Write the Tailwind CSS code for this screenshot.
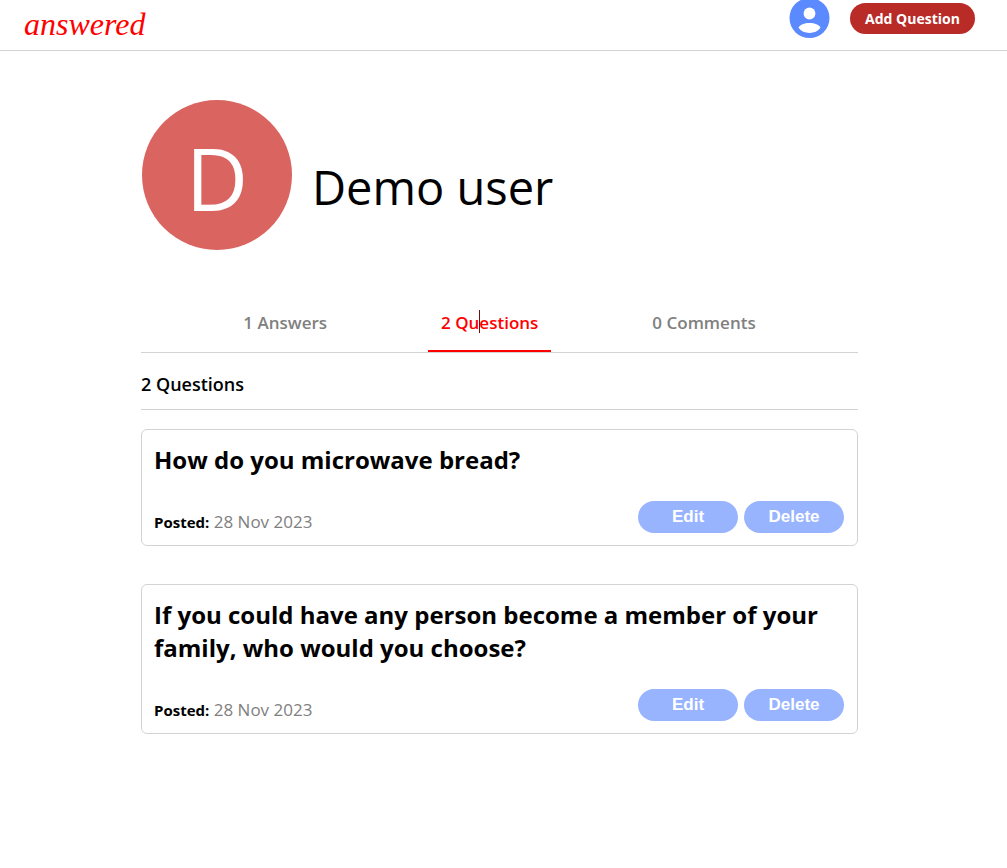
<!DOCTYPE html>
<html lang="en">
<head>
<meta charset="utf-8">
<meta name="viewport" content="width=device-width, initial-scale=1">
<title>answered - Demo user</title>
<script src="https://cdn.jsdelivr.net/npm/@tailwindcss/browser@4"></script>
</head>
<body class="bg-white text-black font-['Segoe_UI','Open_Sans',sans-serif]">
<header class="flex h-[51px] justify-between border-b border-[#d3d3d3] pl-6 pr-8">
  <a href="#" class="pt-1 font-['Liberation_Serif',serif] text-[32px] leading-10 text-[red] italic">answered</a>
  <div class="flex items-start gap-5">
    <button type="button" aria-label="Profile">
      <svg class="block" width="41" height="38" viewBox="0 2 41 38" aria-hidden="true">
        <circle cx="20.500" cy="20" r="20" fill="#5b8aff"/>
        <circle cx="20.500" cy="15.500" r="5.900" fill="#fff"/>
        <path d="M9.500 29.800C10.500 26.800 15.500 25 20.500 25S30.500 26.800 31.500 29.800C29 33.200 25 35 20.500 35S12 33.200 9.500 29.800Z" fill="#fff"/>
      </svg>
    </button>
    <button type="button" class="mt-[3px] h-[31px] w-[125px] whitespace-nowrap rounded-full bg-[#b92b27] text-sm font-bold text-white">Add Question</button>
  </div>
</header>
<main class="pl-[141px] pr-[149px] pt-[49px]">
  <section class="flex items-center gap-5 pl-px">
    <div class="flex size-[150px] shrink-0 items-center justify-center rounded-full bg-[#d96460] pt-1.5 text-[86px] leading-none font-medium text-white">D</div>
    <h1 class="pt-6 text-[47px] leading-12 font-normal">Demo user</h1>
  </section>
  <nav class="mt-11 flex justify-center gap-[88px] border-b border-[#d3d3d3] text-[17px] font-semibold text-[gray]">
    <a href="#" class="flex h-[58px] items-center border-b-2 border-transparent px-[13px] pt-px">1 Answers</a>
    <a href="#" aria-current="page" class="relative flex h-[58px] items-center border-b-2 border-[red] px-[13px] pt-px text-[red]">2 Questions<span class="absolute left-[51px] top-4 h-[23px] w-px bg-[#701010]"></span></a>
    <a href="#" class="flex h-[58px] items-center border-b-2 border-transparent px-[13px] pt-px">0 Comments</a>
  </nav>
  <h2 class="border-b border-[#d3d3d3] pt-[19px] pb-[13px] text-lg leading-6 font-semibold">2 Questions</h2>
  <article class="mt-[19px] rounded-md border border-[#d3d3d3] pt-[13px] pr-[13px] pb-3 pl-3">
    <h3 class="text-2xl leading-[33px] font-bold">How do you microwave bread?</h3>
    <div class="mt-[25px] flex items-end justify-between">
      <p class="text-[17px] leading-[22px] text-[gray]"><b class="text-[15px] font-bold text-black">Posted:</b> 28 Nov 2023</p>
      <div class="flex gap-1.5 font-['Liberation_Sans',sans-serif] text-[17px] font-bold text-white">
        <button type="button" class="h-8 w-[100px] rounded-full bg-[#98b4ff]">Edit</button>
        <button type="button" class="h-8 w-[100px] rounded-full bg-[#98b4ff]">Delete</button>
      </div>
    </div>
  </article>
  <article class="mt-[38px] rounded-md border border-[#d3d3d3] pt-[13px] pr-[13px] pb-3 pl-3">
    <h3 class="text-2xl leading-[33px] font-bold">If you could have any person become a member of your family, who would you choose?</h3>
    <div class="mt-[25px] flex items-end justify-between">
      <p class="text-[17px] leading-[22px] text-[gray]"><b class="text-[15px] font-bold text-black">Posted:</b> 28 Nov 2023</p>
      <div class="flex gap-1.5 font-['Liberation_Sans',sans-serif] text-[17px] font-bold text-white">
        <button type="button" class="h-8 w-[100px] rounded-full bg-[#98b4ff]">Edit</button>
        <button type="button" class="h-8 w-[100px] rounded-full bg-[#98b4ff]">Delete</button>
      </div>
    </div>
  </article>
</main>
</body>
</html>
